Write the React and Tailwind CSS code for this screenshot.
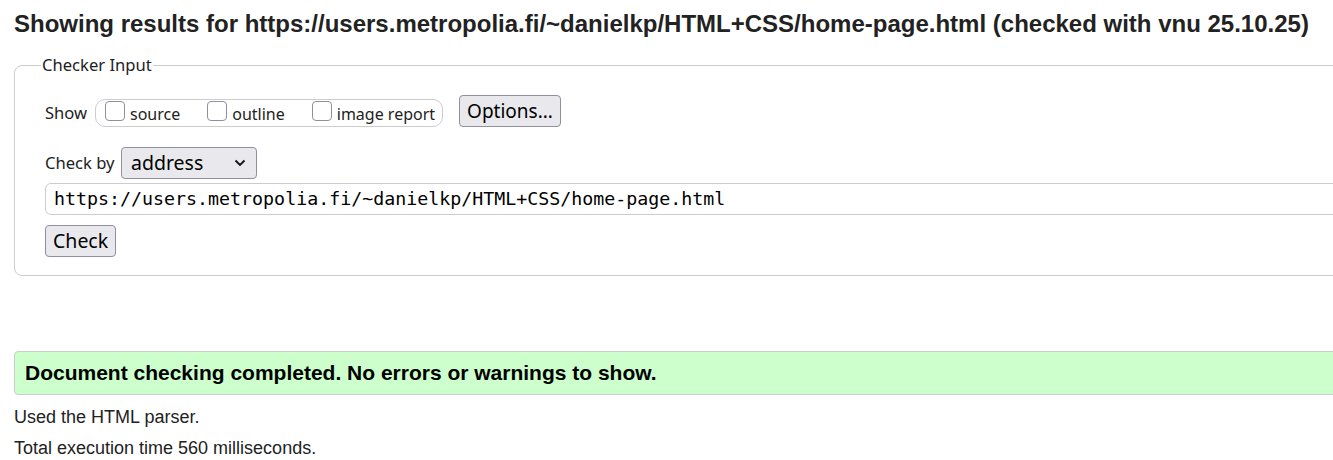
import React from 'react';

const sans = { fontFamily: '"Liberation Sans", Arial, sans-serif' };

function Box({ label }) {
  return (
    <span className="flex items-start">
      <span className="mt-[1px] w-[20px] h-[20px] rounded-[4px] border border-[#8f8f9d] bg-white" />
      <span className="ml-[5px] mt-[1px] leading-[26px]">{label}</span>
    </span>
  );
}

export default function App() {
  return (
    <div className="w-[1333px] h-[460px] overflow-hidden bg-white text-[#222]">
      <h2 className="font-['Liberation_Sans',Arial,sans-serif] pl-[14px] pt-[9px] text-[24px] font-bold leading-[30px] whitespace-nowrap">
        Showing results for https://users.metropolia.fi/~danielkp/HTML+CSS/home-page.html (checked with vnu 25.10.25)
      </h2>

      {/* checker form */}
      <fieldset className="font-['Noto_Sans',sans-serif] ml-[14px] mt-[15px] w-[1400px] border border-[#ccc] rounded-[8px] pl-[30px] pb-[18px] text-[16px]">
        <legend className="-ml-[4px] px-[1px] leading-[22px] text-[16.6px]">Checker Input</legend>

        <div className="mt-[19px] flex items-end">
          <span className="leading-[28px] w-[50px] text-[16.6px]">Show</span>
          <div className="h-[28px] flex items-start gap-[27px] pl-[9px] pr-[7px] border border-[#ccc] rounded-[10px]">
            <Box label="source" />
            <Box label="outline" />
            <Box label="image report" />
          </div>
          <button className="ml-[16px] h-[32px] px-[7px] text-[19px] leading-[30px] bg-[#e9e9ed] border border-[#8f8f9d] rounded-[4px] text-black">
            Options...
          </button>
        </div>

        <div className="mt-[20px] flex items-center">
          <span className="w-[76px] leading-[32px] text-[16.6px]">Check by</span>
          <div className="w-[136px] h-[32px] flex items-center justify-between pl-[9px] pr-[10px] bg-[#e9e9ed] border border-[#8f8f9d] rounded-[4px] text-[19.5px] text-black">
            <span className="leading-[30px]">address</span>
            <svg width="12" height="8" viewBox="0 0 12 8" fill="none" stroke="#111" strokeWidth="1.8">
              <path d="M1.5 1.5 L6 6 L10.5 1.5" />
            </svg>
          </div>
        </div>

        <div className="mt-[4px] h-[32px] w-[1380px] flex items-center pl-[8px] border border-[#ccc] rounded-[6px] font-['DejaVu_Sans_Mono',monospace] text-[18.3px] text-black">
          https://users.metropolia.fi/~danielkp/HTML+CSS/home-page.html
        </div>

        <button className="mt-[10px] block h-[32px] px-[7px] text-[19.5px] leading-[30px] bg-[#e9e9ed] border border-[#8f8f9d] rounded-[4px] text-black">
          Check
        </button>
      </fieldset>

      {/* result */}
      <div style={sans} className="ml-[14px] mt-[75px] w-[1400px] h-[44px] flex items-center pl-[10px] bg-[#ccffcc] border border-[#ccc] rounded-[4px] text-[21px] font-bold text-black">
        Document checking completed. No errors or warnings to show.
      </div>
      <p style={sans} className="pl-[14px] mt-[11px] text-[18px] leading-[22px]">Used the HTML parser.</p>
      <p style={sans} className="pl-[14px] mt-[9px] text-[18px] leading-[22px]">Total execution time 560 milliseconds.</p>
    </div>
  );
}
